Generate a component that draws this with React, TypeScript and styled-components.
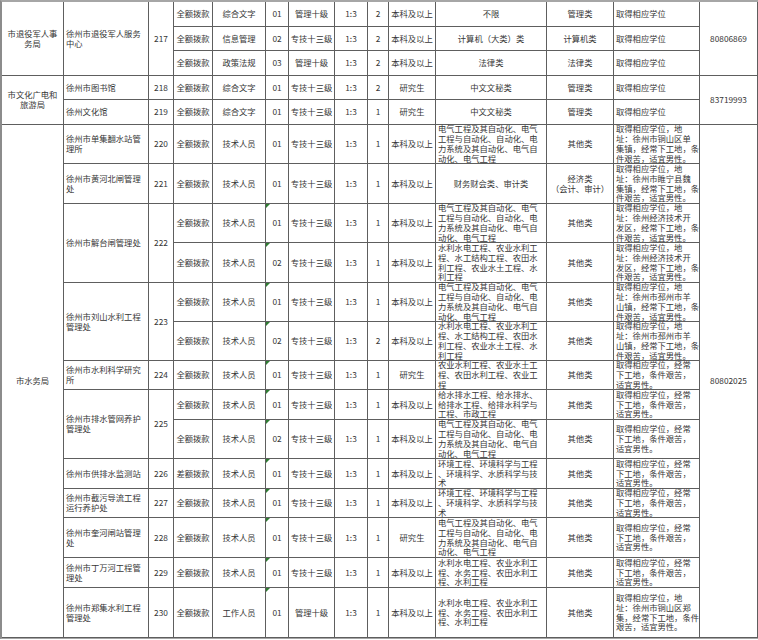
import styled, { createGlobalStyle } from "styled-components";

type Job = {
  fund?: string;
  post?: string;
  code: string;
  level?: string;
  count: number;
  edu?: string;
  major: string;
  cat?: string;
  other: string;
  h: number;
};

type Unit = { name: string; id: number; jobs: Job[] };
type Dept = { name: string; phone: string; units: Unit[] };

const COLS = [62, 85, 25, 39, 53, 23, 46, 33, 21, 47, 111, 67, 86, 58];

const ELEC = "电气工程及其自动化、电气\n工程与自动化、自动化、电\n力系统及其自动化、电气自\n动化、电气工程";
const WATER4 = "水利水电工程、农业水利工\n程、水工结构工程、农田水\n利工程、农业水土工程、水\n利工程";
const WATER3 = "水利水电工程、农业水利工\n程、水务工程、农田水利工\n程、水利工程";
const ENV = "环境工程、环境科学与工程\n、环境科学、水质科学与技\n术";
const AGRI = "农业水利工程、农业水土工\n程、农田水利工程、农业工\n程";
const DRAIN = "给水排水工程、给水排水、\n给排水工程、给排水科学与\n工程、市政工程";
const HARD = "取得相应学位，经常\n下工地，条件艰苦，\n适宜男性。";
const addr = (a: string, b: string) =>
  `取得相应学位，地\n址：${a}\n${b}，经常下工地，条\n件艰苦，适宜男性。`;

const tech = (code: string, count: number, edu: string, major: string, other: string, h: number): Job => ({
  code,
  count,
  edu,
  major,
  other,
  h,
});

const depts: Dept[] = [
  {
    name: "市退役军人事\n务局",
    phone: "80806869",
    units: [
      {
        name: "徐州市退役军人服务\n中心",
        id: 217,
        jobs: [
          { post: "综合文字", code: "01", level: "管理十级", count: 2, major: "不限", cat: "管理类", other: "取得相应学位", h: 25 },
          { post: "信息管理", code: "02", level: "专技十三级", count: 2, major: "计算机（大类）类", cat: "计算机类", other: "取得相应学位", h: 24 },
          { post: "政策法规", code: "03", level: "管理十级", count: 2, major: "法律类", cat: "法律类", other: "取得相应学位", h: 25 },
        ],
      },
    ],
  },
  {
    name: "市文化广电和\n旅游局",
    phone: "83719993",
    units: [
      {
        name: "徐州市图书馆",
        id: 218,
        jobs: [{ post: "综合文字", code: "01", count: 2, edu: "研究生", major: "中文文秘类", cat: "管理类", other: "取得相应学位", h: 24 }],
      },
      {
        name: "徐州文化馆",
        id: 219,
        jobs: [{ post: "综合文字", code: "01", count: 1, edu: "研究生", major: "中文文秘类", cat: "管理类", other: "取得相应学位", h: 25 }],
      },
    ],
  },
  {
    name: "市水务局",
    phone: "80802025",
    units: [
      { name: "徐州市单集翻水站管\n理所", id: 220, jobs: [tech("01", 1, "本科及以上", ELEC, addr("徐州市铜山区单", "集镇"), 39)] },
      {
        name: "徐州市黄河北闸管理\n处",
        id: 221,
        jobs: [{ ...tech("01", 1, "本科及以上", "财务财会类、审计类", addr("徐州市睢宁县魏", "集镇"), 40), cat: "经济类\n（会计、审计）" }],
      },
      {
        name: "徐州市解台闸管理处",
        id: 222,
        jobs: [
          tech("01", 1, "本科及以上", ELEC, addr("徐州经济技术开", "发区"), 39),
          tech("02", 1, "本科及以上", WATER4, addr("徐州经济技术开", "发区"), 40),
        ],
      },
      {
        name: "徐州市刘山水利工程\n管理处",
        id: 223,
        jobs: [
          tech("01", 1, "本科及以上", ELEC, addr("徐州市邳州市羊", "山镇"), 39),
          tech("02", 2, "本科及以上", WATER4, addr("徐州市邳州市羊", "山镇"), 39),
        ],
      },
      { name: "徐州市水利科学研究\n所", id: 224, jobs: [tech("01", 1, "研究生", AGRI, HARD, 29)] },
      {
        name: "徐州市排水管网养护\n管理处",
        id: 225,
        jobs: [tech("01", 1, "本科及以上", DRAIN, HARD, 30), tech("02", 1, "本科及以上", ELEC, HARD, 39)],
      },
      { name: "徐州市供排水监测站", id: 226, jobs: [{ ...tech("01", 1, "本科及以上", ENV, HARD, 30), fund: "差额拨款" }] },
      { name: "徐州市截污导流工程\n运行养护处", id: 227, jobs: [tech("01", 1, "本科及以上", ENV, HARD, 29)] },
      { name: "徐州市奎河闸站管理\n处", id: 228, jobs: [tech("01", 1, "研究生", ELEC, HARD, 40)] },
      { name: "徐州市丁万河工程管\n理处", id: 229, jobs: [tech("01", 1, "本科及以上", WATER3, HARD, 30)] },
      {
        name: "徐州市郑集水利工程\n管理处",
        id: 230,
        jobs: [
          {
            ...tech("01", 1, "本科及以上", WATER3, "取得相应学位，地\n址：徐州市铜山区郑\n集，经常下工地，条件\n艰苦，适宜男性。", 50),
            post: "工作人员",
            level: "管理十级",
          },
        ],
      },
    ],
  },
];

const GlobalStyle = createGlobalStyle`
  body {
    margin: 0;
    background: #fff;
  }
`;

const Sheet = styled.div<{ $rows: string }>`
  display: grid;
  grid-template-columns: ${COLS.map((w) => `${w}px`).join(" ")};
  grid-template-rows: ${(p) => p.$rows};
  width: 758px;
  box-sizing: border-box;
  border-top: 2px solid #a6a6a6;
  border-left: 2px solid #8c8c8c;
  border-bottom: 1px solid #a6a6a6;
  font-family: "Noto Sans CJK SC", "Noto Sans", sans-serif;
  font-size: 8.3px;
  line-height: 9.8px;
  color: #363636;
`;

const Cell = styled.div<{ $span?: number; $flag?: boolean }>`
  grid-row: span ${(p) => p.$span ?? 1};
  position: relative;
  box-sizing: border-box;
  display: flex;
  align-items: center;
  justify-content: center;
  min-width: 0;
  border-right: 1px solid #5e5e5e;
  border-bottom: 1px solid #5e5e5e;
  white-space: pre;
  text-align: center;

  ${(p) =>
    p.$flag &&
    `
    &::before {
      content: "";
      position: absolute;
      top: 0;
      left: 0;
      border-top: 4px solid #2e7d32;
      border-right: 4px solid transparent;
    }
  `}
`;

const LeftCell = styled(Cell)`
  justify-content: flex-start;
  text-align: left;
  padding-left: 2px;
`;

export default function App() {
  const heights: number[] = [];
  const cells: JSX.Element[] = [];

  depts.forEach((d) => {
    const deptSpan = d.units.reduce((n, u) => n + u.jobs.length, 0);
    d.units.forEach((u, ui) => {
      u.jobs.forEach((j, ji) => {
        const k = `${u.id}-${ji}`;
        heights.push(j.h);
        const firstInDept = ui === 0 && ji === 0;
        if (firstInDept) {
          cells.push(
            <Cell key={`${k}-dept`} $span={deptSpan}>
              {d.name}
            </Cell>
          );
        }
        if (ji === 0) {
          cells.push(
            <LeftCell key={`${k}-unit`} $span={u.jobs.length}>
              {u.name}
            </LeftCell>,
            <Cell key={`${k}-id`} $span={u.jobs.length}>
              {u.id}
            </Cell>
          );
        }
        const Major = j.major.includes("\n") ? LeftCell : Cell;
        cells.push(
          <Cell key={`${k}-fund`}>{j.fund ?? "全额拨款"}</Cell>,
          <Cell key={`${k}-post`}>{j.post ?? "技术人员"}</Cell>,
          <Cell key={`${k}-code`} $flag={u.id >= 222}>
            {j.code}
          </Cell>,
          <Cell key={`${k}-level`}>{j.level ?? "专技十三级"}</Cell>,
          <Cell key={`${k}-ratio`}>1:3</Cell>,
          <Cell key={`${k}-count`}>{j.count}</Cell>,
          <Cell key={`${k}-edu`}>{j.edu ?? "本科及以上"}</Cell>,
          <Major key={`${k}-major`}>{j.major}</Major>,
          <Cell key={`${k}-cat`}>{j.cat ?? "其他类"}</Cell>,
          <LeftCell key={`${k}-other`}>{j.other}</LeftCell>
        );
        if (firstInDept) {
          cells.push(
            <Cell key={`${k}-phone`} $span={deptSpan}>
              {d.phone}
            </Cell>
          );
        }
      });
    });
  });

  return (
    <>
      <GlobalStyle />
      <Sheet $rows={heights.map((h) => `${h}px`).join(" ")}>{cells}</Sheet>
    </>
  );
}
